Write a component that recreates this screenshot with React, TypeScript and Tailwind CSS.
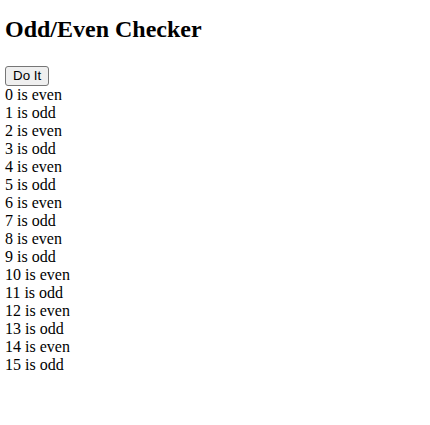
import { useState } from 'react'

const numbers = Array.from({ length: 16 }, (_, i) => i)

export default function App() {
  const [results] = useState(numbers)

  return (
    <div className="pl-[5px] pt-px font-['Liberation_Serif',serif] text-base text-black leading-[18px]">
      <h2 className="text-2xl font-bold leading-[28px] mt-[14px] mb-[23px]">Odd/Even Checker</h2>
      <div className="flex items-start h-[20px]">
        <button className="font-['Liberation_Sans',Arial,sans-serif] text-[13.33px] leading-[16px] px-[7px] py-px border border-[#767676] rounded-[3px] bg-[#efefef] text-black">
          Do It
        </button>
      </div>
      {results.map((n) => (
        <div key={n}>
          {n} is {n % 2 === 0 ? 'even' : 'odd'}
        </div>
      ))}
    </div>
  )
}
